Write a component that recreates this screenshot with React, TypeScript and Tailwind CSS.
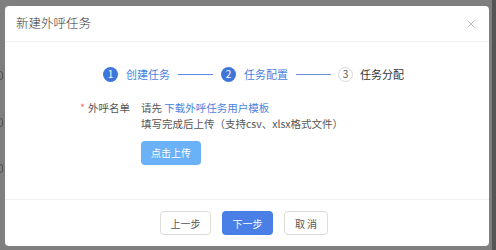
import { X } from "lucide-react";

const font = { fontFamily: '"Noto Sans CJK SC", "Noto Sans", sans-serif' };

function StepDot({ n, active }: { n: number; active: boolean }) {
  return (
    <span
      className={
        active
          ? "flex h-[15px] w-[15px] items-center justify-center rounded-full bg-[#3f76dc] text-[10px] leading-none text-white"
          : "flex h-[15px] w-[15px] items-center justify-center rounded-full border border-[#d9d9d9] text-[10px] leading-none text-[#555]"
      }
    >
      {n}
    </span>
  );
}

export default function App() {
  return (
    <div className="flex h-[250px] w-[496px] bg-[#7f7f7f]" style={font}>
      {/* what peeks out at the left behind the mask */}
      <div className="flex w-[5px] flex-col pt-[71px]">
        <div className="h-[9px] w-[3px] rounded-r-sm border border-l-0 border-[#555]" />
        <div className="mt-[38px] h-[9px] w-[3px] rounded-r-sm border border-l-0 border-[#555]" />
        <div className="mt-[37px] h-[9px] w-[3px] rounded-r-sm border border-l-0 border-[#555]" />
      </div>

      <div className="mt-[6px] flex h-[240px] w-[484px] flex-col rounded-sm bg-white">
        {/* header */}
        <div className="flex h-[36px] items-center justify-between border-b border-[#efefef] pl-[11px] pr-[12px]">
          <span className="text-[12.5px] font-light text-[#333]">新建外呼任务</span>
          <X size={12} strokeWidth={1.3} className="text-[#999]" />
        </div>

        {/* steps */}
        <div className="ml-[98px] mt-[24px] flex items-center text-[11px]">
          <StepDot n={1} active />
          <span className="ml-[8px] text-[#4a7fe0]">创建任务</span>
          <span className="ml-[8px] h-px w-[35px] bg-[#5b88e0]" />
          <span className="ml-[8px]">
            <StepDot n={2} active />
          </span>
          <span className="ml-[8px] text-[#4a7fe0]">任务配置</span>
          <span className="ml-[8px] h-px w-[35px] bg-[#6a8fd6]" />
          <span className="ml-[7px]">
            <StepDot n={3} active={false} />
          </span>
          <span className="ml-[7px] text-[#333]">任务分配</span>
        </div>

        {/* form */}
        <div className="ml-[75px] mt-[17px] flex text-[10.5px] leading-[16px]">
          <div className="flex w-[61px]">
            <span className="mr-[3px] text-[#f56c6c]">*</span>
            <span className="text-[#555]">外呼名单</span>
          </div>
          <div className="flex flex-col text-[#555]">
            <div>
              请先 <span className="text-[#4a7fe0]">下载外呼任务用户模板</span>
            </div>
            <div>填写完成后上传（支持csv、xlsx格式文件）</div>
            <button className="mt-[9px] h-[24px] w-[60px] rounded-sm bg-[#6bb1f7] text-[10px] text-white">
              点击上传
            </button>
          </div>
        </div>

        {/* footer */}
        <div className="mt-auto flex h-[47px] items-center justify-center gap-[11px] border-t border-[#f0f0f0] pr-[6px]">
          <button className="h-[24px] w-[51px] rounded-sm border border-[#dcdcdc] text-[10px] text-[#555]">
            上一步
          </button>
          <button className="h-[24px] w-[51px] rounded-sm bg-[#4a80e6] text-[10px] text-white">
            下一步
          </button>
          <button className="h-[24px] w-[44px] rounded-sm border border-[#dcdcdc] text-[10px] text-[#555]">
            取 消
          </button>
        </div>
      </div>

      <div className="ml-[3px] w-[4px] bg-[#555]" />
    </div>
  );
}
